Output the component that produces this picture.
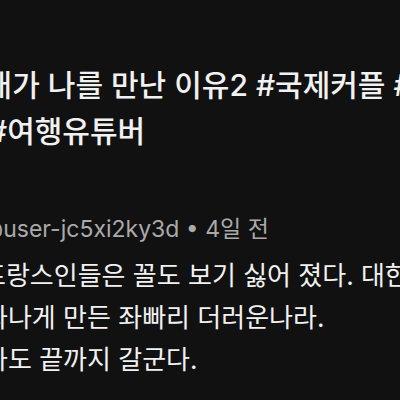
export default function App() {
  return (
    <div
      className="w-[400px] h-[400px] overflow-hidden bg-[#111111] text-[#f1f1f1]"
      style={{ fontFamily: '"Inter", "Noto Sans CJK KR", sans-serif' }}
    >
      <div className="pt-[62px] w-[560px]">
        {/* Video title */}
        <h1 className="-ml-[43px] text-[30px] leading-[46px] font-medium whitespace-nowrap">
          <div>미래가 나를 만난 이유2 #국제커플 #프랑스</div>
          <div className="ml-[31px]">#여행유튜버</div>
        </h1>

        {/* Comment */}
        <div className="mt-[60px]">
          <div className="-ml-[19px] text-[23px] leading-[30px] text-[#aaaaaa] whitespace-nowrap">
            @user-jc5xi2ky3d • 4일 전
          </div>
          <p className="mt-[11px] -ml-[18px] text-[26px] leading-[42px] whitespace-nowrap">
            <span className="block">프랑스인들은 꼴도 보기 싫어 졌다. 대한민국을</span>
            <span className="block ml-[2px]">화나게 만든 좌빠리 더러운나라.</span>
            <span className="block ml-[2px]">나도 끝까지 갈군다.</span>
          </p>
        </div>
      </div>
    </div>
  )
}
